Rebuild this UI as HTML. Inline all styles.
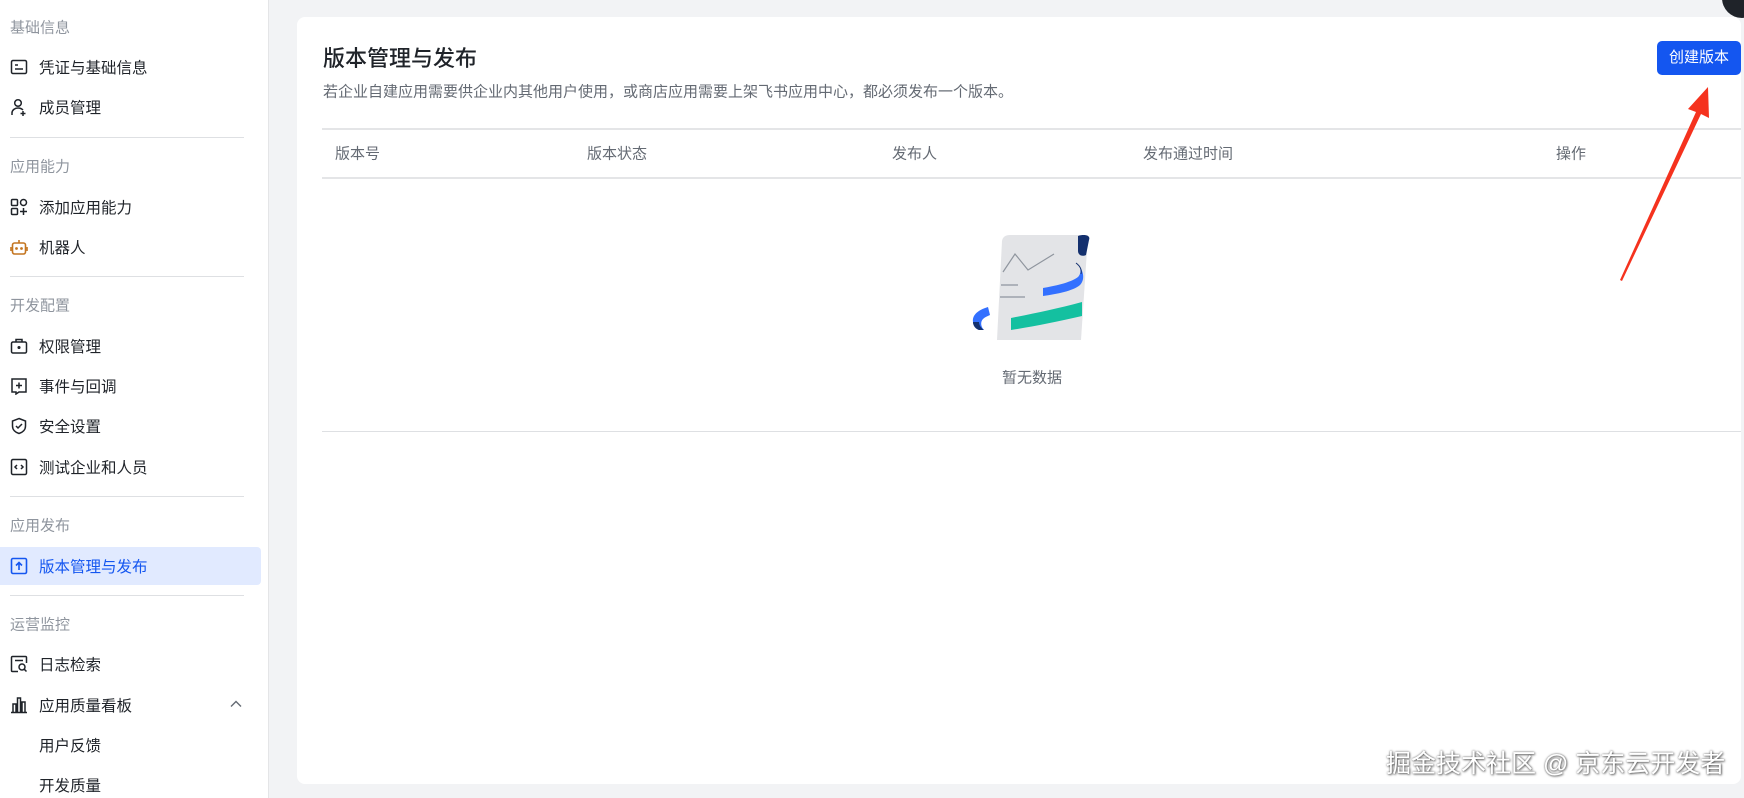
<!DOCTYPE html>
<html><head><meta charset="utf-8"><style>
*{margin:0;padding:0;box-sizing:border-box}
body{width:1744px;height:798px;overflow:hidden;background:#f2f3f5;font-family:"Liberation Sans","Noto Sans CJK SC",sans-serif;position:relative}
.side{position:absolute;left:0;top:0;width:269px;height:798px;background:#fff;border-right:1px solid #e4e5e7}
.h{position:absolute;left:10px;font-size:15px;color:#8f959e;transform:translateY(-50%)}
.i{position:absolute;left:39px;font-size:15.5px;color:#1f2329;transform:translateY(-50%)}
.ic{position:absolute;left:10px;width:18px;height:18px;transform:translateY(-50%)}
.d{position:absolute;left:10px;width:234px;height:1px;background:#dee0e3}
.act{position:absolute;left:0;top:547px;width:261px;height:38px;background:#e1eaff;border-radius:0 4px 4px 0}
.card{position:absolute;left:297px;top:17px;width:1444px;height:767px;background:#fff;border-radius:8px}
.col{position:absolute;top:153px;font-size:15px;color:#646a73;transform:translateY(-50%)}
</style></head><body>
<div class="side">
<div class="h" style="top:27px">基础信息</div>
<svg class="ic" style="top:67px" viewBox="0 0 18 18" fill="none" stroke="#1f2329" stroke-width="1.5"><rect x="1.5" y="2.5" width="15" height="13" rx="1.5"/><path d="M5 7h3M5 11h8"/></svg>
<div class="i" style="top:67px">凭证与基础信息</div>
<svg class="ic" style="top:107px" viewBox="0 0 18 18" fill="none" stroke="#1f2329" stroke-width="1.5"><circle cx="8" cy="5" r="3.3"/><path d="M2 17v-2c0-3 3-5 6-5s4 1 5 2M13 13v5M10.5 15.5h5"/></svg>
<div class="i" style="top:107px">成员管理</div>
<div class="d" style="top:137px"></div>
<div class="h" style="top:166px">应用能力</div>
<svg class="ic" style="top:207px" viewBox="0 0 18 18" fill="none" stroke="#1f2329" stroke-width="1.5"><rect x="1.5" y="1.5" width="6" height="6" rx="1"/><rect x="10.5" y="1.5" width="6" height="6" rx="3"/><rect x="1.5" y="10.5" width="6" height="6" rx="1"/><path d="M13.5 10v7M10 13.5h7"/></svg>
<div class="i" style="top:207px">添加应用能力</div>
<svg class="ic" style="top:247px" viewBox="0 0 18 18" fill="none" stroke="#c47520" stroke-width="1.6"><rect x="2.5" y="5" width="13" height="11" rx="2"/><path d="M9 2v3M1 9v4M17 9v4"/><circle cx="6.5" cy="10.5" r=".6" fill="#c47520"/><circle cx="11.5" cy="10.5" r=".6" fill="#c47520"/></svg>
<div class="i" style="top:247px">机器人</div>
<div class="d" style="top:276px"></div>
<div class="h" style="top:305px">开发配置</div>
<svg class="ic" style="top:346px" viewBox="0 0 18 18" fill="none" stroke="#1f2329" stroke-width="1.5"><rect x="1.5" y="5" width="15" height="11" rx="1.5"/><path d="M6 5V2.5h6V5"/><circle cx="9" cy="10.5" r=".8" fill="#1f2329"/></svg>
<div class="i" style="top:346px">权限管理</div>
<svg class="ic" style="top:386px" viewBox="0 0 18 18" fill="none" stroke="#1f2329" stroke-width="1.5"><path d="M2 2h14v13H9l-3 2v-2H2z"/><path d="M9 5.5v6M6 8.5h6"/></svg>
<div class="i" style="top:386px">事件与回调</div>
<svg class="ic" style="top:426px" viewBox="0 0 18 18" fill="none" stroke="#1f2329" stroke-width="1.5"><path d="M9 1.5l6.5 2.5v5c0 4-3 6.5-6.5 7.5C5.5 15.5 2.5 13 2.5 9V4z"/><path d="M6 9l2 2 4-4"/></svg>
<div class="i" style="top:426px">安全设置</div>
<svg class="ic" style="top:467px" viewBox="0 0 18 18" fill="none" stroke="#1f2329" stroke-width="1.5"><rect x="1.5" y="1.5" width="15" height="15" rx="1.5"/><path d="M7 7l-2 2 2 2M11 7l2 2-2 2"/></svg>
<div class="i" style="top:467px">测试企业和人员</div>
<div class="d" style="top:496px"></div>
<div class="h" style="top:525px">应用发布</div>
<div class="act"></div>
<svg class="ic" style="top:566px" viewBox="0 0 18 18" fill="none" stroke="#1456f0" stroke-width="1.6"><rect x="1.5" y="1.5" width="15" height="15" rx="1.5"/><path d="M9 13V5.5M6 8.5l3-3 3 3"/></svg>
<div class="i" style="top:566px;color:#1456f0">版本管理与发布</div>
<div class="d" style="top:595px"></div>
<div class="h" style="top:624px">运营监控</div>
<svg class="ic" style="top:664px" viewBox="0 0 18 18" fill="none" stroke="#1f2329" stroke-width="1.5"><path d="M8 16.5H2.5a1 1 0 0 1-1-1v-13a1 1 0 0 1 1-1h13a1 1 0 0 1 1 1V8"/><circle cx="12" cy="12" r="3"/><path d="M14.2 14.2l2.3 2.3M5 5.5h8"/></svg>
<div class="i" style="top:664px">日志检索</div>
<svg class="ic" style="top:705px" viewBox="0 0 18 18" fill="none" stroke="#1f2329" stroke-width="1.5"><path d="M1 16.5h16M3 16.5V8h3v8.5M7.5 16.5V2h3v14.5M12 16.5V6h3v10.5"/></svg>
<div class="i" style="top:705px">应用质量看板</div>
<svg style="position:absolute;left:230px;top:700px" width="12" height="8" viewBox="0 0 12 8" fill="none" stroke="#646a73" stroke-width="1.4"><path d="M1 6.5l5-5 5 5"/></svg>
<div class="i" style="top:745px">用户反馈</div>
<div class="i" style="top:785px">开发质量</div>
</div>

<div class="card"></div>
<div style="position:absolute;left:323px;top:57px;transform:translateY(-50%);font-size:22px;color:#1f2329;font-weight:500">版本管理与发布</div>
<div style="position:absolute;left:323px;top:91px;transform:translateY(-50%);font-size:15px;color:#646a73">若企业自建应用需要供企业内其他用户使用，或商店应用需要上架飞书应用中心，都必须发布一个版本。</div>
<div style="position:absolute;left:1657px;top:41px;width:84px;height:34px;background:#1456f0;border-radius:5px;color:#fff;font-size:15px;line-height:34px;text-align:center">创建版本</div>
<div style="position:absolute;left:322px;top:128px;width:1419px;height:2px;background:#e4e5e7"></div>
<div style="position:absolute;left:322px;top:177px;width:1419px;height:2px;background:#e4e5e7"></div>
<div style="position:absolute;left:322px;top:431px;width:1419px;height:1px;background:#dee0e3"></div>
<div class="col" style="left:335px">版本号</div>
<div class="col" style="left:587px">版本状态</div>
<div class="col" style="left:892px">发布人</div>
<div class="col" style="left:1143px">发布通过时间</div>
<div class="col" style="left:1556px">操作</div>

<svg style="position:absolute;left:960px;top:230px" width="140" height="115" viewBox="960 230 140 115">
<path d="M1002 241q1-6 8-6h78l-7 105h-84z" fill="#e3e4e7"/>
<path d="M1078 236c6-2 13-1 11 4l-3 15c-4 2-8 0-8-4z" fill="#14306e"/>
<polyline points="1003,272 1015,254 1028,270 1054,254" fill="none" stroke="#8f959e" stroke-width="1.2"/>
<path d="M1001 285h17M1000 297h25" stroke="#8f959e" stroke-width="1.3"/>
<path d="M1076 263c5 3 6 10 2 14c-8 6-24 9-35 11v8c14-2 30-5 37-11c6-6 3-17-4-22z" fill="#3370ff"/>
<path d="M1076 263c4 3 6 7 5 11" fill="none" stroke="#14306e" stroke-width="1"/>
<path d="M988 307c-10 3-16 8-15 15c0 4 3 7 6 8l5 0c-3-3-4-8-1-11c2-2 5-3 7-4z" fill="#3370ff"/>
<path d="M973 322c0 4 3 7 6 8l5 0c-3-2-5-5-5-8z" fill="#14306e"/>
<path d="M1011 318c25-5 45-9 71-16v14c-26 6-46 10-71 14z" fill="#14c0a0"/>
</svg>
<div style="position:absolute;left:1032px;top:377px;transform:translate(-50%,-50%);font-size:15px;color:#646a73">暂无数据</div>

<svg style="position:absolute;left:1600px;top:80px" width="120" height="210" viewBox="1600 80 120 210">
<path d="M1620 280L1696 112l-8-3 20-22 1 31-8-4-79 167z" fill="#f5321e"/>
</svg>
<div style="position:absolute;left:1722px;top:-22px;width:40px;height:40px;border-radius:50%;background:#1f2329"></div>
<div style="position:absolute;left:1386px;top:762px;transform:translateY(-50%);font-size:25px;color:#fff;text-shadow:0 0 2px rgba(0,0,0,.6),1px 1px 2px rgba(0,0,0,.5)">掘金技术社区 @ 京东云开发者</div>
</body></html>
